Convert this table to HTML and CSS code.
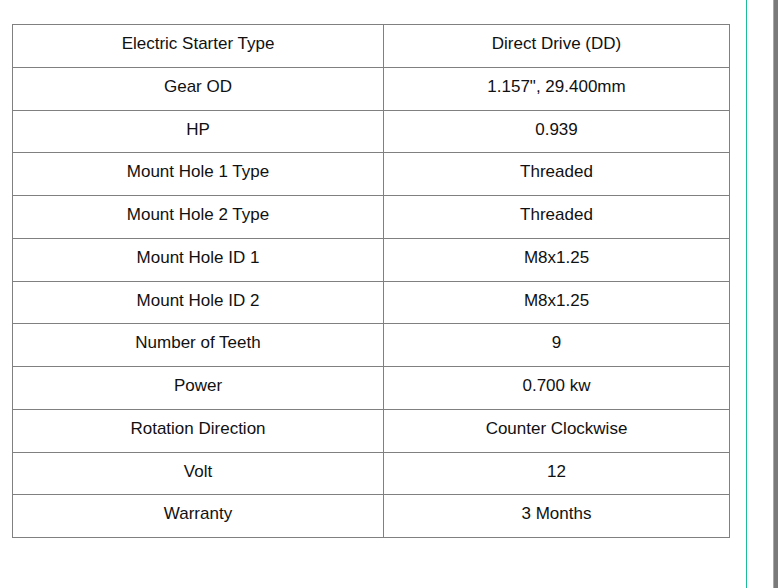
FILE: index.html
```html
<!DOCTYPE html>
<html>
<head>
<meta charset="utf-8">
<link rel="stylesheet" href="styles.css">
</head>
<body>
<div class="page">
  <div class="content">
    <table class="specs">
      <colgroup><col class="c1"><col class="c2"></colgroup>
      <tbody>
        <tr><td>Electric Starter Type</td><td>Direct Drive (DD)</td></tr>
        <tr><td>Gear OD</td><td>1.157", 29.400mm</td></tr>
        <tr><td>HP</td><td>0.939</td></tr>
        <tr><td>Mount Hole 1 Type</td><td>Threaded</td></tr>
        <tr><td>Mount Hole 2 Type</td><td>Threaded</td></tr>
        <tr><td>Mount Hole ID 1</td><td>M8x1.25</td></tr>
        <tr><td>Mount Hole ID 2</td><td>M8x1.25</td></tr>
        <tr><td>Number of Teeth</td><td>9</td></tr>
        <tr><td>Power</td><td>0.700 kw</td></tr>
        <tr><td>Rotation Direction</td><td>Counter Clockwise</td></tr>
        <tr><td>Volt</td><td>12</td></tr>
        <tr><td>Warranty</td><td>3 Months</td></tr>
      </tbody>
    </table>
  </div>
  <div class="gap"></div>
  <div class="bar"></div>
</div>
</body>
</html>
```
FILE: styles.css
```css
html, body {
  margin: 0;
  padding: 0;
  background: #fff;
  overflow: hidden;
}
.page {
  display: grid;
  grid-template-columns: 747px 26px 12px;
  width: 785px;
  height: 588px;
  overflow: hidden;
}
.content {
  box-sizing: border-box;
  border-right: 1px solid #1abc9c;
  padding: 24px 0 0 12px;
}
.bar {
  background: #7a7a7a;
  border-left: 1px solid #a8a8a8;
}
.specs {
  border-collapse: collapse;
  width: 718px;
  font-family: "Liberation Sans", Arial, sans-serif;
  font-size: 17px;
  color: #111;
}
.c1 { width: 371px; }
.specs td {
  border: 1px solid #808080;
  text-align: center;
  padding: 10px 4px 14px;
  line-height: 17.75px;
}
```
